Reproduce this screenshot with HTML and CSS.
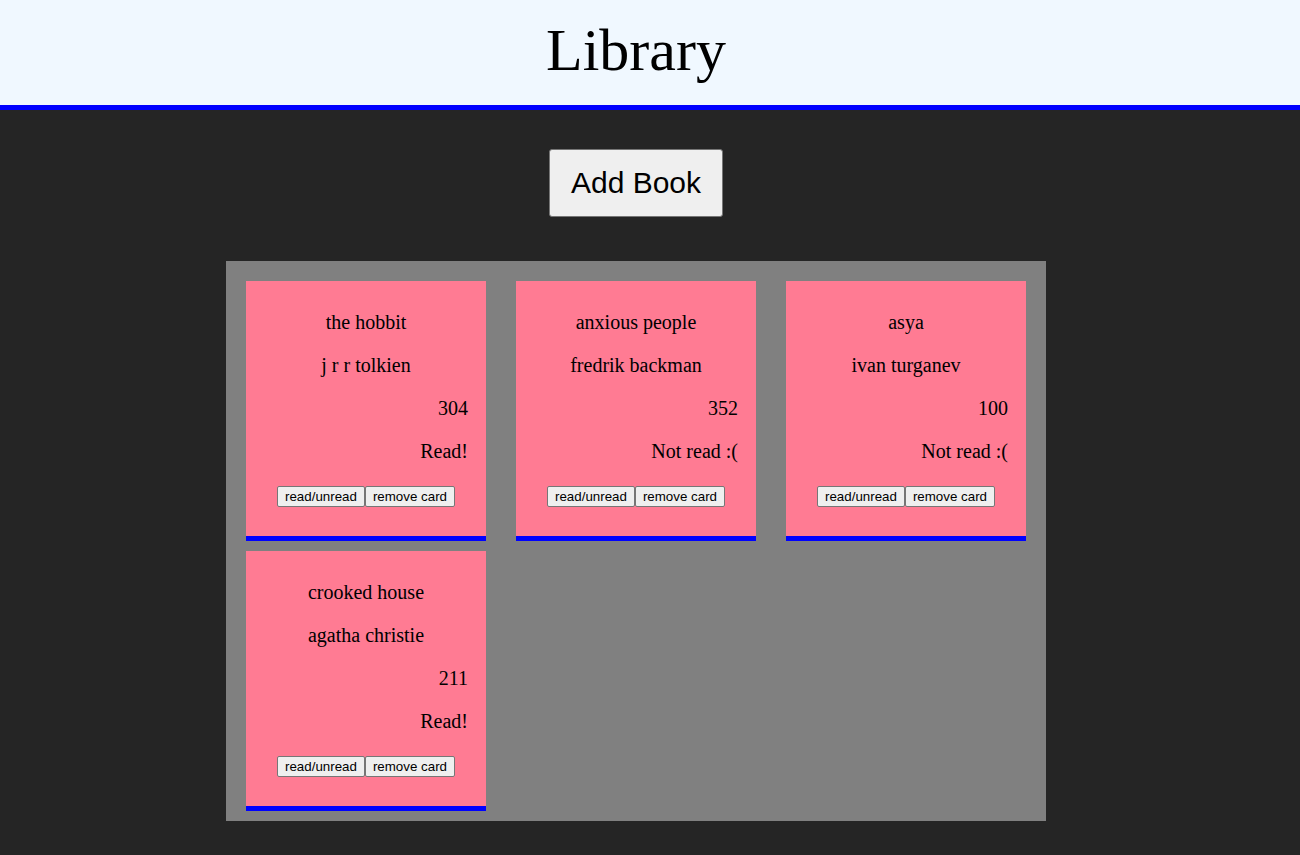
FILE: index.html
```html
<!DOCTYPE html>
<html lang="en">
<head>
<meta charset="utf-8">
<title>Library</title>
<link rel="stylesheet" href="styles.css">
</head>
<body>
<header class="site-header">
  <h1 class="site-title">Library</h1>
</header>
<main class="page">
  <div class="actions">
    <button class="add-book" type="button">Add Book</button>
  </div>
  <section class="library">
    <article class="card">
      <p class="title">the hobbit</p>
      <p class="author">j r r tolkien</p>
      <p class="pages">304</p>
      <p class="status">Read!</p>
      <div class="card-buttons"><button class="small-btn" type="button">read/unread</button><button class="small-btn" type="button">remove card</button></div>
    </article>
    <article class="card">
      <p class="title">anxious people</p>
      <p class="author">fredrik backman</p>
      <p class="pages">352</p>
      <p class="status">Not read :(</p>
      <div class="card-buttons"><button class="small-btn" type="button">read/unread</button><button class="small-btn" type="button">remove card</button></div>
    </article>
    <article class="card">
      <p class="title">asya</p>
      <p class="author">ivan turganev</p>
      <p class="pages">100</p>
      <p class="status">Not read :(</p>
      <div class="card-buttons"><button class="small-btn" type="button">read/unread</button><button class="small-btn" type="button">remove card</button></div>
    </article>
    <article class="card">
      <p class="title">crooked house</p>
      <p class="author">agatha christie</p>
      <p class="pages">211</p>
      <p class="status">Read!</p>
      <div class="card-buttons"><button class="small-btn" type="button">read/unread</button><button class="small-btn" type="button">remove card</button></div>
    </article>
  </section>
</main>
</body>
</html>
```
FILE: styles.css
```css
html, body {
  margin: 0;
  padding: 0;
}

body {
  background: #252525;
  font-family: "Liberation Serif", "Times New Roman", serif;
  color: #000;
  min-height: 855px;
}

.site-header {
  background: #f0f8ff;
  border-bottom: 5px solid #0000ff;
  padding: 16px 0 20px;
}

.site-title {
  margin: 0 28px 0 0;
  font-size: 60px;
  font-weight: normal;
  text-align: center;
  line-height: 69px;
}

.page {
  margin-right: 28px;
  padding-top: 39px;
  display: flex;
  flex-direction: column;
  align-items: center;
}

.actions {
  margin-bottom: 44px;
}

.add-book {
  font-family: "Liberation Sans", Arial, sans-serif;
  font-size: 30px;
  padding: 16px 21px;
  background: #efefef;
  border: 1px solid #767676;
  border-radius: 3px;
  color: #000;
  line-height: normal;
}

.library {
  width: 820px;
  box-sizing: border-box;
  background: #808080;
  padding: 20px 20px 10px;
  display: grid;
  grid-template-columns: repeat(3, 240px);
  column-gap: 30px;
  row-gap: 10px;
}

.card {
  background: #ff7b93;
  border-bottom: 5px solid #0000ff;
  height: 260px;
  box-sizing: border-box;
  padding: 10px 18px 0;
  font-size: 20px;
}

.card p {
  margin: 20px 0;
  line-height: 23px;
}

.title, .author {
  text-align: center;
}

.pages, .status {
  text-align: right;
}

.card-buttons {
  text-align: center;
  margin-top: 23px;
  font-size: 0;
}

.small-btn {
  font-family: "Liberation Sans", Arial, sans-serif;
  font-size: 13.333px;
  padding: 2px 7px;
  background: #efefef;
  border: 1px solid #767676;
  border-radius: 2px;
  color: #000;
  vertical-align: top;
}
```
